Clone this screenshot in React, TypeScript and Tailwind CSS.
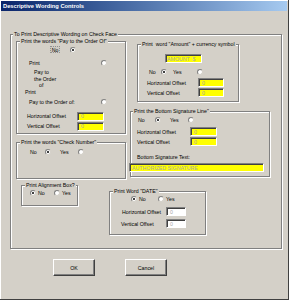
import React from "react";

const Radio = ({ checked }: { checked?: boolean }) => (
  <span className="relative inline-block w-[6px] h-[6px] shrink-0 rounded-full bg-white border border-t-[#808080] border-l-[#808080] border-r-[#d4d0c8] border-b-[#d4d0c8]">
    {checked && <span className="absolute left-[1px] top-[1px] w-[2px] h-[2px] rounded-full bg-black" />}
  </span>
);

const Group = ({
  label,
  className,
  labelClass,
  children,
}: {
  label: string;
  className: string;
  labelClass: string;
  children?: React.ReactNode;
}) => (
  <div className={`relative shrink-0 border border-[#808080] shadow-[inset_1px_1px_0_#fff,1px_1px_0_#fff] ${className}`}>
    <span className={`absolute top-[-4px] bg-[#d4d0c8] px-[1px] leading-[6px] whitespace-pre ${labelClass}`}>{label}</span>
    <div className="flex flex-col">{children}</div>
  </div>
);

const Field = ({ value, className }: { value: string; className: string }) => (
  <div
    className={`flex items-center shrink-0 border border-t-[#808080] border-l-[#808080] border-r-white border-b-white shadow-[inset_1px_1px_0_#404040] text-[#a8a8a8] whitespace-nowrap overflow-hidden ${className}`}
  >
    {value}
  </div>
);

const Button = ({ children }: { children: React.ReactNode }) => (
  <div className="w-[42px] h-[17px] flex items-center justify-center border border-t-white border-l-white border-r-[#404040] border-b-[#404040] shadow-[inset_-1px_-1px_0_#808080]">
    {children}
  </div>
);

export default function App() {
  return (
    <div className="w-[289px] h-[300px] bg-[#d4d0c8] pt-[1px] pl-[1px] pr-[1px] border-r border-b border-r-[#404040] border-b-[#404040] shadow-[inset_1px_1px_0_#fff] overflow-hidden font-['Liberation_Sans',Arial,sans-serif] text-[5.25px] leading-[6px] text-black">
      <div className="h-[10px] bg-linear-to-r from-[#0a246a] to-[#a6caf0] flex items-center pl-[2px] text-white font-bold text-[5.75px] whitespace-nowrap">
        Descriptive Wording Controls
      </div>

      <Group
        label="To Print Descriptive Wording on Check Face"
        labelClass="left-[2px]"
        className="mt-[23px] ml-[9px] w-[272px] h-[215px]"
      >
        <div className="flex items-start">
          <div className="ml-[5px] mt-[6px] flex flex-col">
            <Group label={'Print the words "Pay to the Order Of"'} labelClass="left-[3px]" className="w-[110px] h-[93px]">
              <div className="mt-[4px] h-[7px] flex items-center">
                <span className="ml-[33px] w-[10px] h-[7px] flex items-center justify-center border border-dotted border-[#909090] bg-[#cfcbc3] text-black">No</span>
                <span className="ml-[10px] flex"><Radio checked /></span>
              </div>
              <div className="mt-[7px] h-[6px] flex items-center">
                <span className="ml-[12px] w-[72px]">Print</span>
                <Radio />
              </div>
              <div className="mt-[3px] ml-[17px] flex flex-col leading-[6.5px]">
                <span>Pay to</span>
                <span>the Order</span>
                <span className="ml-[5px]">of</span>
              </div>
              <div className="h-[6px] flex items-center">
                <span className="ml-[8px]">Print</span>
              </div>
              <div className="mt-[4px] h-[6px] flex items-center">
                <span className="ml-[12px] w-[72px] whitespace-nowrap">Pay to the Order of:</span>
                <Radio />
              </div>
              <div className="mt-[7px] h-[9px] flex items-center">
                <span className="ml-[10px] w-[50px] whitespace-nowrap">Horizontal Offset</span>
                <Field value="0" className="w-[27px] h-[9px] bg-[#ffff00] pl-[3px]" />
              </div>
              <div className="mt-[1px] h-[9px] flex items-center">
                <span className="ml-[10px] w-[50px] whitespace-nowrap">Vertical Offset</span>
                <Field value="0" className="w-[27px] h-[9px] bg-[#ffff00] pl-[3px]" />
              </div>
            </Group>

            <Group label={'Print the words "Check Number"'} labelClass="left-[3px]" className="mt-[8px] w-[110px] h-[37px]">
              <div className="mt-[6px] h-[6px] flex items-center">
                <span className="ml-[13px] w-[15px]">No</span>
                <Radio checked />
                <span className="ml-[9px] w-[18px]">Yes</span>
                <Radio />
              </div>
            </Group>
          </div>

          <div className="ml-[4px] flex flex-col">
            <Group
              label={'Print  word "Amount" + currency symbol'}
              labelClass="left-[3px]"
              className="ml-[7px] mt-[9px] w-[102px] h-[58px]"
            >
              <Field value="AMOUNT  $" className="mt-[9px] ml-[27px] w-[37px] h-[9px] bg-[#ffff00] pl-[1px] whitespace-pre" />
              <div className="mt-[6px] h-[6px] flex items-center">
                <span className="ml-[11px] w-[12px]">No</span>
                <Radio checked />
                <span className="ml-[6px] w-[24px]">Yes</span>
                <Radio />
              </div>
              <div className="mt-[3px] h-[9px] flex items-center">
                <span className="ml-[9px] w-[51px] whitespace-nowrap">Horizontal Offset</span>
                <Field value="0" className="w-[26px] h-[9px] bg-[#ffff00] pl-[3px]" />
              </div>
              <div className="mt-[1px] h-[9px] flex items-center">
                <span className="ml-[9px] w-[51px] whitespace-nowrap">Vertical Offset</span>
                <Field value="0" className="w-[26px] h-[9px] bg-[#ffff00] pl-[3px]" />
              </div>
            </Group>

            <Group
              label={'Print the Bottom Signature Line"'}
              labelClass="left-[2px]"
              className="mt-[9px] w-[140px] h-[66px]"
            >
              <div className="mt-[5px] h-[6px] flex items-center">
                <span className="ml-[7px] w-[17px]">No</span>
                <Radio checked />
                <span className="ml-[9px] w-[18px]">Yes</span>
                <Radio />
              </div>
              <div className="mt-[4px] h-[9px] flex items-center">
                <span className="ml-[6px] w-[53px] whitespace-nowrap">Horizontal Offset</span>
                <Field value="0" className="w-[27px] h-[9px] bg-[#ffff00] pl-[3px]" />
              </div>
              <div className="mt-[1px] h-[9px] flex items-center">
                <span className="ml-[6px] w-[53px] whitespace-nowrap">Vertical Offset</span>
                <Field value="0" className="w-[27px] h-[9px] bg-[#ffff00] pl-[3px]" />
              </div>
              <div className="mt-[8px] h-[6px] flex items-center">
                <span className="ml-[6px] whitespace-nowrap">Bottom Signature Text:</span>
              </div>
              <Field value="AUTHORIZED SIGNATURE" className="mt-[3px] ml-[-2px] w-[135px] h-[9px] bg-[#ffff00] pl-[2px]" />
            </Group>
          </div>
        </div>

        <div className="flex items-start">
          <Group label="Print Alignment Box?" labelClass="left-[3px]" className="ml-[10px] mt-[6px] w-[57px] h-[21px]">
            <div className="mt-[4px] h-[6px] flex items-center">
              <span className="ml-[8px] flex"><Radio checked /></span>
              <span className="ml-[2px] w-[16px]">No</span>
              <Radio />
              <span className="ml-[2px]">Yes</span>
            </div>
          </Group>

          <Group label={'Print Word "DATE"'} labelClass="left-[3px]" className="ml-[31px] mt-[12px] w-[97px] h-[44px]">
            <div className="mt-[4px] h-[6px] flex items-center">
              <span className="ml-[21px] flex"><Radio checked /></span>
              <span className="ml-[2px] w-[19px]">No</span>
              <Radio />
              <span className="ml-[2px]">Yes</span>
            </div>
            <div className="mt-[5px] h-[9px] flex items-center">
              <span className="ml-[12px] w-[44px] whitespace-nowrap">Horizontal Offset</span>
              <Field value="0" className="w-[20px] h-[9px] bg-white pl-[3px]" />
            </div>
            <div className="mt-[3px] h-[9px] flex items-center">
              <span className="ml-[11px] w-[45px] whitespace-nowrap">Vertical Offset</span>
              <Field value="0" className="w-[20px] h-[9px] bg-white pl-[3px]" />
            </div>
          </Group>
        </div>
      </Group>

      <div className="mt-[10px] ml-[52px] flex gap-[30px]">
        <Button>OK</Button>
        <Button>Cancel</Button>
      </div>
    </div>
  );
}
